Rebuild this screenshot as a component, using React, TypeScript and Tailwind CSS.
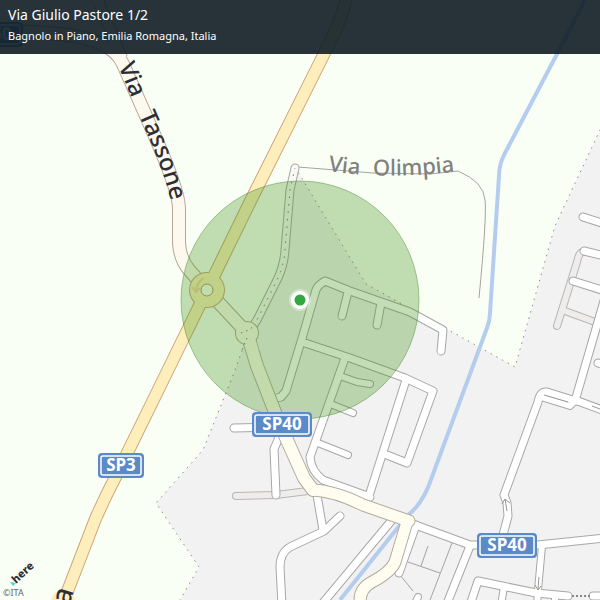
type Road = { d: string; w: number };

const WHITE_ROADS: Road[] = [
  { d: 'M273 399 L281 397 L286 391 L303 335 L316 290 Q318 285 325 281 L350 291 L410 312 L443 330 L441 351', w: 7 },
  { d: 'M348 292 L342 316', w: 7 },
  { d: 'M381 303 L377 325', w: 7 },
  { d: 'M302 342 L350 358 L405 378 L433 391 L407 463 L387 455', w: 7 },
  { d: 'M406 380 L368 499', w: 7 },
  { d: 'M345 358 L315 443 L310 457 Q311 471 323 480 L370 497', w: 7 },
  { d: 'M343 377 L357 382 L370 384', w: 6 },
  { d: 'M333 405 L353 413', w: 6 },
  { d: 'M318 443 L348 455', w: 6 },
  { d: 'M234 428 L275 427', w: 7 },
  { d: 'M279 432 L278 440 L274 449 L276 495', w: 7 },
  { d: 'M317 495 L323 530', w: 7 },
  { d: 'M340 516 L324 531 L290 547 Q280 553 280 567 L282 605', w: 7 },
  { d: 'M392 520 L322 604', w: 7 },
  { d: 'M416 525 L399 573', w: 7 },
  { d: 'M410 523 L470 545 L538 545 L605 538', w: 7 },
  { d: 'M470 546 L446 606', w: 7 },
  { d: 'M503 535 L508 516 L507 503 L504 495 L538 402 Q540 391 547 392 L576 401', w: 7 },
  { d: 'M541 397 L570 406 L576 400', w: 6 },
  { d: 'M575 401 L606 294', w: 7 },
  { d: 'M575 400 L605 411', w: 7 },
  { d: 'M542 546 L538 590', w: 6 },
  { d: 'M470 605 L478 581 L536 593 L568 596', w: 7 },
  { d: 'M504 587 L501 605', w: 6 },
  { d: 'M538 592 L537 605', w: 6 },
  { d: 'M555 595 L555 605', w: 6 },
  { d: 'M593 596 L605 596', w: 7 },
  { d: 'M418 597 L414 606', w: 6 },
  { d: 'M583 217 L605 224', w: 7 },
  { d: 'M584 251 L605 256', w: 7 },
  { d: 'M573 281 L605 291', w: 7 },
  { d: 'M598 363 L605 365', w: 7 },
];

const GRAY_ROADS: Road[] = [
  { d: 'M236 496 L276 495 L308 491', w: 6 },
  { d: 'M583 252 Q579 252 577 262 L557 326', w: 6 },
  { d: 'M565 311 L595 322', w: 6 },
];

const CREAM_ROADS: Road[] = [
  { d: 'M247 333 L257 366 L278 420 L304 478 L313 490', w: 12 },
  { d: 'M313 490 Q335 491 363 505 L409 521', w: 11 },
  { d: 'M407 522 L395 562 Q391 572 372 582 Q357 590 361 606', w: 11 },
];

const FOOTPATHS = [
  'M298 167 L373 173 L430 174 L458 171 Q484 182 485 200 Q487 215 479 298',
  'M452 543 L430 600',
  'M408 562 L440 573',
  'M428 546 L421 566',
  'M400 575 L413 591',
];

const ROAD_MARKS = [
  'M544 395 L568 402',
  'M592 406 L600 409',
  'M507 511 L505 499 M502 504 L505 499 L510 503',
  'M539 577 L538 589 M535 585 L538 590 L541 586',
];

const BOUNDARIES = [
  'M295 167 L366 284 L515 367 L555 226 L600 130',
  'M249 332 L232 378 L203 450 L156 503 L199 567 L180 600',
];

const PROVINCIAL = 'M347 -5 Q344 10 338 25 L324 54 L251 200 L168 370 L115 478 Q105 497 95 520 L68 590 L64 602';
const TASSONE = 'M0 30 L60 34 Q112 39 123 64 L150 125 Q179 190 179 208 V243 Q180 260 190 271 L207 290 L247 333';
const TRACK = 'M249 332 L257 320 L278 278 Q284 265 285 250 L290 190 L295 168';

function Cased({ roads, fill, casing }: { roads: Road[]; fill: string; casing: string }) {
  return (
    <g fill="none" strokeLinecap="round" strokeLinejoin="round">
      {roads.map((r) => (
        <path key={r.d} d={r.d} stroke={casing} strokeWidth={r.w + 2} />
      ))}
      {roads.map((r) => (
        <path key={r.d} d={r.d} stroke={fill} strokeWidth={r.w} />
      ))}
    </g>
  );
}

function Shield({ x, y, w, label }: { x: number; y: number; w: number; label: string }) {
  return (
    <g>
      <rect x={x - w / 2} y={y - 12} width={w} height={25} rx={4} fill="#5a8ac8" />
      <rect x={x - w / 2 + 3} y={y - 9} width={w - 6} height={19} rx={2} fill="none" stroke="#fff" strokeWidth={1.5} />
      <text x={x} y={y + 6} textAnchor="middle" fontSize={17} fontWeight={700} fill="#fff">
        {label}
      </text>
    </g>
  );
}

function StreetMap() {
  return (
    <svg
      viewBox="0 0 600 600"
      role="img"
      aria-label="Street map of Via Giulio Pastore"
      className="block h-auto w-full font-['Noto_Sans','Open_Sans',sans-serif]"
    >
      <rect width="600" height="600" fill="#fafff5" />
      <path
        d="M295 167 L366 284 L515 367 L555 226 L600 130 V600 H180 L199 567 L156 503 L203 450 L232 378 L249 332 L284 262 Z"
        fill="#f3f2f2"
      />

      <g fill="none" stroke="#8a8a85" strokeWidth="1" strokeDasharray="1.5 5">
        {BOUNDARIES.map((d) => (
          <path key={d} d={d} />
        ))}
      </g>

      <path
        d="M585 0 L557 54 L504 155 Q499 165 499 176 L490 313 Q490 320 487 328 L429 485 Q421 505 408 515 L340 600"
        fill="none"
        stroke="#b4cdee"
        strokeWidth="4"
      />

      <g fill="none" stroke="#a5a3a0" strokeWidth="1">
        {FOOTPATHS.map((d) => (
          <path key={d} d={d} />
        ))}
      </g>

      <Cased roads={GRAY_ROADS} fill="#eeedec" casing="#b8b6b5" />
      <Cased roads={[{ d: TRACK, w: 7 }]} fill="#f8f8f6" casing="#a9a7a4" />
      <path d={TRACK} fill="none" stroke="#777" strokeWidth="1" strokeDasharray="1.5 6" />
      <Cased roads={WHITE_ROADS} fill="#ffffff" casing="#a9a7a6" />
      <g fill="none" stroke="#999794" strokeWidth="1">
        {ROAD_MARKS.map((d) => (
          <path key={d} d={d} />
        ))}
      </g>
      <path d="M572 596 H590" stroke="#888" strokeWidth="2" strokeDasharray="2 2" />

      <Cased roads={CREAM_ROADS} fill="#fffdf0" casing="#b3ad9f" />

      <g fill="none" strokeLinejoin="round">
        <path d="M98 0 L122 58" stroke="#b3a797" strokeWidth="12" />
        <path d={TASSONE} stroke="#b3a797" strokeWidth="14" />
        <circle cx="247" cy="333" r="12" fill="#b3a797" />
        <path d="M98 0 L122 58" stroke="#fef9ee" strokeWidth="10" />
        <path d={TASSONE + ' L253 352'} stroke="#fef9ee" strokeWidth="12" />
        <circle cx="247" cy="333" r="11" fill="#fef9ee" />
      </g>
      <path d="M241 333 L249 330 L255 325 M247 338 L242 350" fill="none" stroke="#777" strokeWidth="1" strokeDasharray="1.5 4" />

      <g fill="none">
        <path d={PROVINCIAL} stroke="#cfa57c" strokeWidth="13" />
        <circle cx="207" cy="290" r="18" fill="#cfa57c" />
        <path d={PROVINCIAL} stroke="#fdeebc" strokeWidth="11" />
        <circle cx="207" cy="290" r="17" fill="#fdeebc" />
        <circle cx="207" cy="290" r="6" fill="#fafff5" stroke="#b98f66" strokeWidth="1" />
        <path d="M204 278 Q197 282 196 290 M192 287 L196 292 L200 288" stroke="#f0d0a4" strokeWidth="2" />
      </g>

      <circle cx="300" cy="300" r="119" fill="rgb(57 141 15 / 0.3)" stroke="rgb(57 121 30 / 0.4)" strokeWidth="1" />

      <Shield x={-8} y={34} w={62} label="SP60" />
      <Shield x={282} y={424} w={60} label="SP40" />
      <Shield x={121} y={465} w={46} label="SP3" />
      <Shield x={507} y={545} w={60} label="SP40" />

      <path id="tassone" d="M118 65 L131 97 L148 136 Q164 172 174 212" fill="none" />
      <path id="olimpia" d="M328 171 Q390 180 458 171" fill="none" />
      <g fontSize="22" fontWeight="500" fill="#2c2e36">
        <text fontSize="24">
          <textPath href="#tassone" startOffset="1">Via</textPath>
        </text>
        <text fontSize="24">
          <textPath href="#tassone" startOffset="54">Tassone</textPath>
        </text>
        <circle cx="63" cy="602" r="12" fill="#fdeebc" />
        <text transform="translate(69 606) rotate(-72)" fontSize="28">
          a
        </text>
        <text fill="#80817d">
          <textPath href="#olimpia" startOffset="0">Via</textPath>
        </text>
        <text fill="#80817d">
          <textPath href="#olimpia" startOffset="45">Olimpia</textPath>
        </text>
      </g>

      <circle cx="300" cy="300" r="11" fill="#ffffff" opacity="0.35" />
      <circle cx="300" cy="300" r="9" fill="#ffffff" />
      <circle cx="300" cy="300" r="5.5" fill="#32a83f" />

      <path d="M10 582 L16 583 L13 586 Z" fill="#48dad0" />
      <text transform="translate(16 584) rotate(-43)" fontSize="11" fontWeight="800" fill="#2c2e36">
        here
      </text>
      <text x="3" y="596" fontSize="9" fill="#666866">
        ©ITA
      </text>
    </svg>
  );
}

export default function App() {
  return (
    <main className="relative w-full overflow-hidden">
      <StreetMap />
      <header className="absolute inset-x-0 top-0 bg-[#101d25]/90 px-2 pt-1 pb-2 font-['Noto_Sans','Open_Sans',sans-serif] text-white">
        <h1 className="text-sm leading-[22px]">Via Giulio Pastore 1/2</h1>
        <p className="text-[11px] leading-5">Bagnolo in Piano, Emilia Romagna, Italia</p>
      </header>
    </main>
  );
}
